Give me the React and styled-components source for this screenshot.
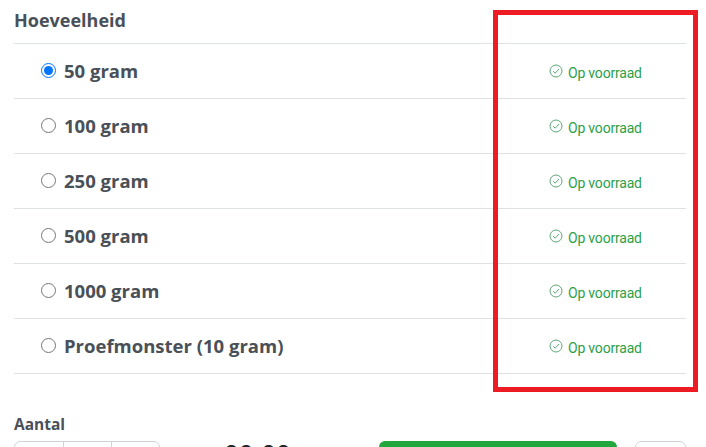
import React from "react";
import styled, { createGlobalStyle } from "styled-components";

const Global = createGlobalStyle`
  html, body { margin: 0; padding: 0; background: #fff; overflow: hidden; }
  body { font-family: "Open Sans", "Noto Sans", sans-serif; color: #495057; }
`;
const Page = styled.div`
  position: relative;
  width: 706px;
  height: 447px;
  overflow: hidden;
  box-sizing: border-box;
  padding: 0 20px 0 14px;
`;
const Heading = styled.div`
  font-size: 18px;
  font-weight: 700;
  line-height: 20px;
  padding-top: 10px;
  height: 43px;
  box-sizing: border-box;
`;
const Table = styled.div`
  border-top: 1px solid #dee2e6;
`;
const Row = styled.label`
  display: grid;
  grid-template-columns: 1fr 137px;
  align-items: center;
  height: 55px;
  box-sizing: border-box;
  border-bottom: 1px solid #dee2e6;
`;
const Option = styled.span`
  display: flex;
  align-items: center;
  gap: 8px;
  padding-left: 27px;
  font-size: 18.5px;
  font-weight: 700;
  margin-top: -2px;
`;
const Radio = styled.input`
  width: 15px;
  height: 15px;
  margin: 0;
  accent-color: #0075ff;
`;
const Stock = styled.span`
  display: flex;
  align-items: center;
  gap: 5px;
  font-family: "Roboto", sans-serif;
  font-size: 14px;
  letter-spacing: -0.2px;
  color: #2c9f47;
  margin-top: 3px;
`;
const CheckIcon = styled.svg`
  width: 14px;
  height: 14px;
  margin-top: -3px;
  flex: none;
`;
const Marker = styled.div`
  position: absolute;
  left: 493px;
  top: 10px;
  width: 205px;
  height: 382px;
  box-sizing: border-box;
  border: 5px solid #ed1c24;
  pointer-events: none;
`;
const Label = styled.div`
  font-size: 15.5px;
  font-weight: 700;
  line-height: 20px;
  margin-top: 40px;
`;
const Actions = styled.div`
  display: flex;
  align-items: flex-start;
  margin-top: 7px;
`;
const Stepper = styled.div`
  display: grid;
  grid-template-columns: 48px 48px 48px;
  width: 146px;
  height: 38px;
  box-sizing: border-box;
  border: 1px solid #ced4da;
  border-radius: 6px;
`;
const StepCell = styled.div`
  & + & { border-left: 1px solid #ced4da; }
`;
const Price = styled.div`
  width: 219px;
  padding-left: 64px;
  box-sizing: border-box;
  font-size: 26px;
  font-weight: 700;
  line-height: 24px;
  margin-top: 1px;
  color: #212529;
`;
const BuyButton = styled.div`
  width: 238px;
  height: 38px;
  background: #22a73f;
  border-radius: 6px;
`;
const WishButton = styled.div`
  width: 51px;
  height: 38px;
  margin-left: 18px;
  box-sizing: border-box;
  border: 1px solid #ced4da;
  border-radius: 6px;
`;

const options = ["50 gram", "100 gram", "250 gram", "500 gram", "1000 gram", "Proefmonster (10 gram)"];

export default function App() {
  return (
    <Page>
      <Global />
      <Heading>Hoeveelheid</Heading>
      <Table>
        {options.map((o, i) => (
          <Row key={o}>
            <Option>
              <Radio type="radio" name="qty" defaultChecked={i === 0} />
              {o}
            </Option>
            <Stock>
              <CheckIcon viewBox="0 0 14 14" fill="none" stroke="#5fa777" strokeWidth="1">
                <circle cx="7" cy="7" r="6" />
                <path d="M4.2 7.2l2 2 3.8-4.2" />
              </CheckIcon>
              Op voorraad
            </Stock>
          </Row>
        ))}
      </Table>
      <Label>Aantal</Label>
      <Actions>
        <Stepper>
          <StepCell />
          <StepCell />
          <StepCell />
        </Stepper>
        <Price>00:00</Price>
        <BuyButton />
        <WishButton />
      </Actions>
      <Marker />
    </Page>
  );
}
